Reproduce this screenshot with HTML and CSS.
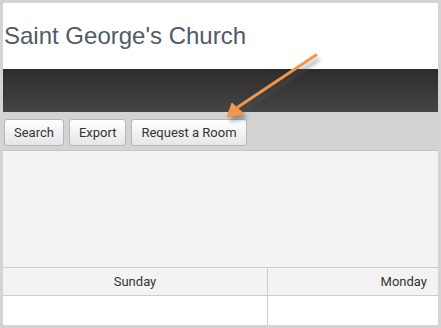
FILE: index.html
```html
<!DOCTYPE html>
<html lang="en">

<head>
    <meta charset="UTF-8" />
    <meta name="viewport" content="width=device-width, initial-scale=1.0" />
    <title>Saint George's Church</title>
    <link rel="stylesheet" href="styles.css">
</head>

<body>
    <div class="frame">
        <!-- site header -->
        <div class="site-header">
            <h1 class="site-title">Saint George's Church</h1>
        </div>

        <div class="nav-bar"></div>

        <!-- toolbar -->
        <div class="tool-bar">
            <button class="tool-btn">Search</button>
            <button class="tool-btn">Export</button>
            <button class="tool-btn">Request a Room</button>
        </div>

        <div class="filter-area"></div>

        <!-- calendar -->
        <div class="cal-grid">
            <div class="cal-head">Sunday</div>
            <div class="cal-head right">Monday</div>
            <div class="cal-cell"></div>
            <div class="cal-cell"></div>
        </div>

        <!-- callout arrow -->
        <svg class="callout" width="441" height="328" viewBox="0 0 441 328">
            <defs>
                <filter id="shadow" x="-20%" y="-20%" width="140%" height="140%">
                    <feGaussianBlur stdDeviation="2" />
                </filter>
            </defs>
            <g fill="#555" stroke="#555" opacity="0.55" filter="url(#shadow)" transform="translate(3,4)">
                <line x1="316" y1="55" x2="238" y2="107" stroke-width="3" />
                <polygon points="227,117 232,103 244,114" />
            </g>
            <g fill="#f4954a" stroke="#f4954a">
                <line x1="316" y1="55" x2="238" y2="107" stroke-width="3" stroke-linecap="round" />
                <polygon points="227,117 232,103 244,114" stroke-width="1" stroke-linejoin="round" />
            </g>
        </svg>
    </div>
</body>

</html>
```

FILE: styles.css
```css
html,
body {
    margin: 0;
    height: 100%;
    background-color: #d4d4d4;
    font-family: Roboto, Arial, sans-serif;
    overflow: hidden;
}

.frame {
    position: relative;
    margin: 3px;
    height: 322px;
    background-color: #f3f3f3;
}

.site-header {
    height: 66px;
    background-color: #ffffff;
    display: flex;
    align-items: center;
}

.site-title {
    margin: 0 0 0 1px;
    font-family: "Liberation Sans", Arial, sans-serif;
    font-weight: normal;
    font-size: 24px;
    color: #4f5b68;
}

.nav-bar {
    height: 43px;
    background: linear-gradient(#2c2c2c, #454545);
}

.tool-bar {
    height: 39px;
    box-sizing: border-box;
    padding: 7px 1px 0;
    display: flex;
    gap: 5px;
    align-items: flex-start;
    background-color: #d3d3d3;
    border-bottom: 1px solid #c4c4c4;
}

.tool-btn {
    height: 27px;
    padding: 0 9px;
    font-family: Roboto, Arial, sans-serif;
    font-size: 13px;
    color: #333333;
    background: linear-gradient(#ffffff, #e6e6e6);
    border: 1px solid #b6b6b6;
    border-radius: 3px;
}

.filter-area {
    height: 116px;
}

.cal-grid {
    display: grid;
    grid-template-columns: 264px 1fr;
    border-top: 1px solid #cccccc;
}

.cal-head {
    height: 27px;
    line-height: 27px;
    text-align: center;
    font-size: 13px;
    color: #333333;
    border-bottom: 1px solid #cccccc;
}

.cal-head.right {
    text-align: right;
    padding-right: 11px;
    border-left: 1px solid #cccccc;
}

.cal-cell {
    height: 29px;
    background-color: #ffffff;
}

.cal-cell + .cal-cell {
    border-left: 1px solid #cccccc;
}

.callout {
    position: absolute;
    top: -3px;
    left: -3px;
    pointer-events: none;
}
```
